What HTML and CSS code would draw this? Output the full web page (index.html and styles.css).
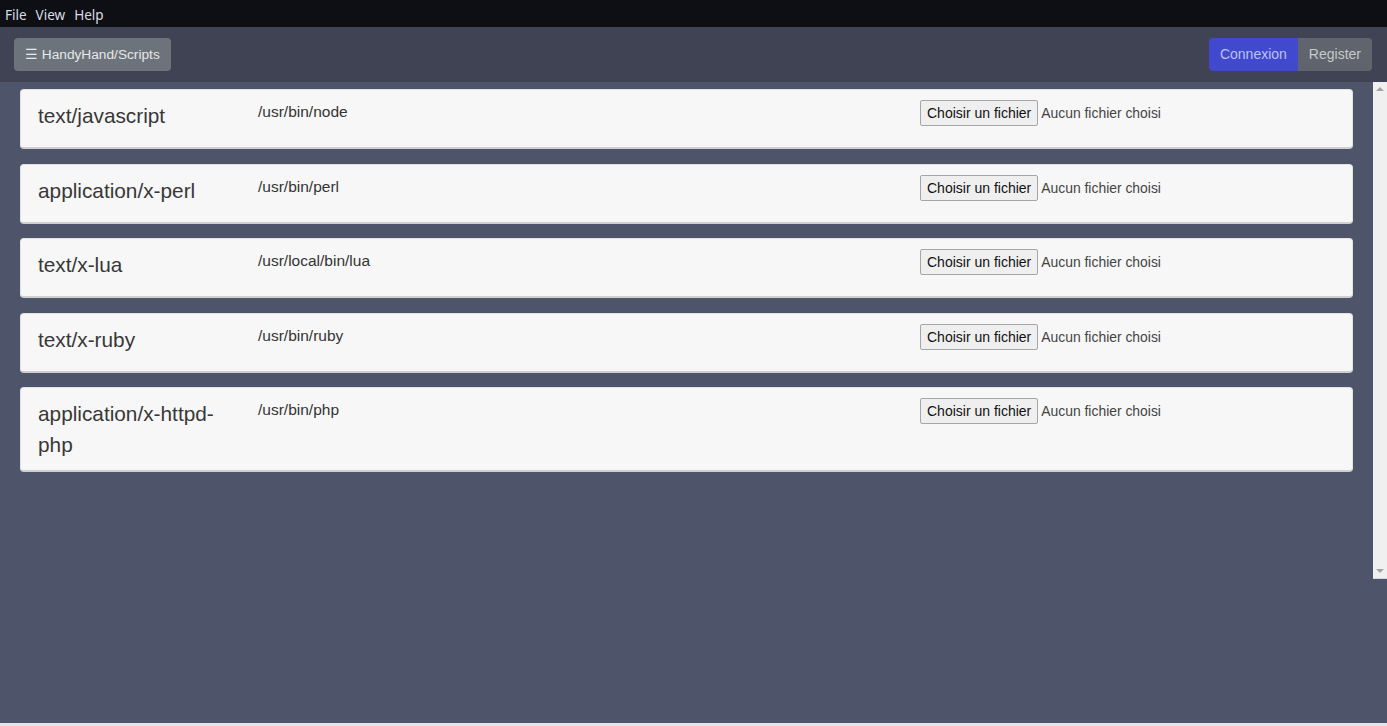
FILE: index.html
```html
<!DOCTYPE html>
<html lang="fr">
<head>
<meta charset="utf-8">
<title>HandyHand/Scripts</title>
<link rel="stylesheet" href="styles.css">
</head>
<body>
<div class="app">
  <div class="menubar">
    <span class="menu-item">File</span>
    <span class="menu-item">View</span>
    <span class="menu-item">Help</span>
  </div>
  <header class="header">
    <button class="btn btn-brand">&#9776; HandyHand/Scripts</button>
    <div class="btn-group">
      <button class="btn btn-login">Connexion</button>
      <button class="btn btn-register">Register</button>
    </div>
  </header>
  <div class="viewport">
    <main class="list">
      <div class="card">
        <div class="mime">text/javascript</div>
        <div class="path">/usr/bin/node</div>
        <div class="file"><button class="file-btn">Choisir un fichier</button><span class="file-name">Aucun fichier choisi</span></div>
      </div>
      <div class="card">
        <div class="mime">application/x-perl</div>
        <div class="path">/usr/bin/perl</div>
        <div class="file"><button class="file-btn">Choisir un fichier</button><span class="file-name">Aucun fichier choisi</span></div>
      </div>
      <div class="card">
        <div class="mime">text/x-lua</div>
        <div class="path">/usr/local/bin/lua</div>
        <div class="file"><button class="file-btn">Choisir un fichier</button><span class="file-name">Aucun fichier choisi</span></div>
      </div>
      <div class="card">
        <div class="mime">text/x-ruby</div>
        <div class="path">/usr/bin/ruby</div>
        <div class="file"><button class="file-btn">Choisir un fichier</button><span class="file-name">Aucun fichier choisi</span></div>
      </div>
      <div class="card">
        <div class="mime">application/x-httpd-php</div>
        <div class="path">/usr/bin/php</div>
        <div class="file"><button class="file-btn">Choisir un fichier</button><span class="file-name">Aucun fichier choisi</span></div>
      </div>
    </main>
    <div class="scrollbar">
      <span class="arrow arrow-up"></span>
      <span class="arrow arrow-down"></span>
    </div>
  </div>
  <div class="filler"></div>
  <div class="bottom-strip"></div>
</div>
</body>
</html>
```

FILE: styles.css
```css
html, body {
  margin: 0;
  padding: 0;
  height: 100%;
}

body {
  background: #4e5469;
  font-family: "Liberation Sans", Arial, sans-serif;
  overflow: hidden;
}

.app {
  display: flex;
  flex-direction: column;
  height: 100vh;
}

.menubar {
  height: 27px;
  flex: none;
  box-sizing: border-box;
  background: #0e0f14;
  display: flex;
  align-items: center;
  padding: 3px 0 0 5px;
  font-family: "Noto Sans", "Open Sans", sans-serif;
  font-size: 13.5px;
  color: #d9dce3;
}

.menu-item {
  margin-right: 9px;
}

.header {
  height: 55px;
  flex: none;
  box-sizing: border-box;
  background: #3f4354;
  display: flex;
  align-items: center;
  justify-content: space-between;
  padding: 0 15px 0 14px;
}

.btn {
  border: none;
  font-family: "Liberation Sans", Arial, sans-serif;
  font-size: 14px;
  line-height: 21px;
  padding: 6px 12px;
  height: 33px;
  border-radius: 4px;
  cursor: pointer;
}

.btn-brand {
  background: #6c737b;
  color: #e6e7e9;
  font-size: 13.7px;
  padding: 6px 11px;
}

.btn-group {
  display: flex;
}

.btn-login {
  background: #4149cf;
  color: #bcc1f1;
  border-radius: 4px 0 0 4px;
  padding: 6px 11px;
}

.btn-register {
  background: #60656d;
  color: #c6c8cb;
  border-radius: 0 4px 4px 0;
  padding: 6px 11px;
}

.viewport {
  height: 497px;
  flex: none;
  display: flex;
}

.list {
  flex: 1;
  padding: 7px 20px 0 20px;
  overflow: hidden;
}

.card {
  display: grid;
  grid-template-columns: 220px 662px 1fr;
  align-items: start;
  background: #f7f7f7;
  border: 1px solid #e2e2e2;
  border-bottom: 2px solid #cfcfcf;
  border-radius: 4px;
  padding: 10px 18px 10px 17px;
  margin-bottom: 14.5px;
  min-height: 37px;
}

.mime {
  width: 200px;
  font-size: 20.8px;
  line-height: 31px;
  color: #383838;
  overflow-wrap: break-word;
}

.path {
  font-size: 15.5px;
  line-height: 23px;
  color: #343434;
}

.file {
  display: flex;
  align-items: center;
  font-size: 13.9px;
  color: #444444;
}

.file-btn {
  font-family: "Liberation Sans", Arial, sans-serif;
  font-size: 14px;
  color: #111111;
  background: #efefef;
  border: 1px solid #a6a6a6;
  border-radius: 2px;
  height: 26px;
  padding: 0 6px;
  margin: 0 3px 0 0;
}

.file-name {
  line-height: 26px;
}

.scrollbar {
  width: 14px;
  flex: none;
  background: #f0f0f0;
  display: flex;
  flex-direction: column;
  justify-content: space-between;
  align-items: center;
  padding: 5px 0;
  box-sizing: border-box;
  border-bottom: 1px solid #d8d8d8;
}

.arrow {
  width: 0;
  height: 0;
  border-left: 4px solid transparent;
  border-right: 4px solid transparent;
}

.arrow-up {
  border-bottom: 4px solid #a3a3a3;
}

.arrow-down {
  border-top: 4px solid #a3a3a3;
}

.filler {
  flex: 1;
}

.bottom-strip {
  height: 3px;
  flex: none;
  background: #e4e5e8;
}
```
